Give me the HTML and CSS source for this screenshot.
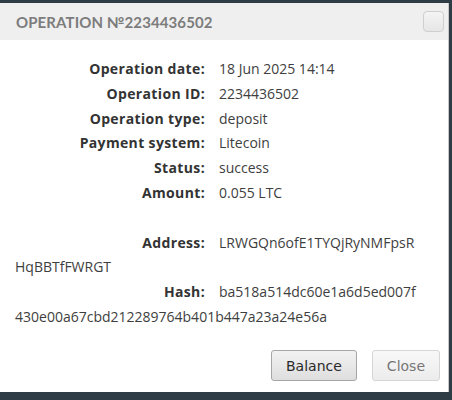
FILE: index.html
```html
<!DOCTYPE html>
<html>
<head>
<meta charset="utf-8">
<link rel="stylesheet" href="styles.css">
</head>
<body>
<div class="top-strip"></div>
<div class="dialog">
  <div class="header">
    <div class="title">OPERATION №2234436502</div>
    <div class="hbtn"></div>
  </div>
  <div class="content">
    <div class="row"><span class="lbl">Operation date:</span><span class="val">18 Jun 2025 14:14</span></div>
    <div class="row"><span class="lbl">Operation ID:</span><span class="val">2234436502</span></div>
    <div class="row"><span class="lbl">Operation type:</span><span class="val">deposit</span></div>
    <div class="row"><span class="lbl">Payment system:</span><span class="val">Litecoin</span></div>
    <div class="row"><span class="lbl">Status:</span><span class="val">success</span></div>
    <div class="row"><span class="lbl">Amount:</span><span class="val">0.055 LTC</span></div>
    <div class="row empty"></div>
    <div class="row"><span class="lbl">Address:</span><span class="val">LRWGQn6ofE1TYQjRyNMFpsR<br>HqBBTfFWRGT</span></div>
    <div class="row"><span class="lbl">Hash:</span><span class="val">ba518a514dc60e1a6d5ed007f<br>430e00a67cbd212289764b401b447a23a24e56a</span></div>
  </div>
  <div class="footer">
    <button class="btn primary">Balance</button>
    <button class="btn muted">Close</button>
  </div>
</div>
<div class="bottom-strip"></div>
</body>
</html>
```
FILE: styles.css
```css
html, body { margin: 0; padding: 0; }
body {
  width: 452px;
  height: 400px;
  background: #2e3c45;
  overflow: hidden;
  font-family: "Open Sans", "Liberation Sans", sans-serif;
}
.top-strip { height: 3px; }
.dialog {
  width: 448px;
  height: 389px;
  background: #fff;
  border-right: 1px solid #c8c8c8;
  display: flex;
  flex-direction: column;
}
.header {
  height: 37px;
  background: #efefef;
  display: flex;
  align-items: center;
  justify-content: space-between;
  padding: 0 4px 0 16px;
}
.title {
  font-family: "Lato", sans-serif;
  font-weight: 700;
  font-size: 15px;
  letter-spacing: 0.1px;
  color: #7c7c7c;
}
.hbtn {
  width: 19px;
  height: 19px;
  border: 1px solid #cfcfcf;
  border-radius: 4px;
  background: linear-gradient(#f4f4f4, #e6e6e6);
}
.content {
  flex: 1;
  padding: 17px 15px 0 15px;
  font-size: 14px;
  line-height: 24.8px;
  color: #3e3e3e;
}
.row { min-height: 24.8px; }
.lbl {
  display: inline-block;
  width: 190px;
  text-align: right;
  font-weight: 700;
  letter-spacing: 0.35px;
  color: #333;
  margin-right: 14px;
}
.footer {
  display: flex;
  justify-content: flex-end;
  gap: 15px;
  padding: 0 8px 11px 0;
}
.btn {
  font-family: "DejaVu Sans", sans-serif;
  font-size: 14px;
  height: 31px;
  border-radius: 3px;
  padding: 0 14px;
}
.primary {
  border: 1px solid #a6a6a6;
  background: linear-gradient(#f2f2f2, #dedede);
  color: #2a2a2a;
}
.muted {
  border: 1px solid #d6d6d6;
  background: linear-gradient(#f8f8f8, #ececec);
  color: #777;
}
.bottom-strip { height: 8px; }
```
